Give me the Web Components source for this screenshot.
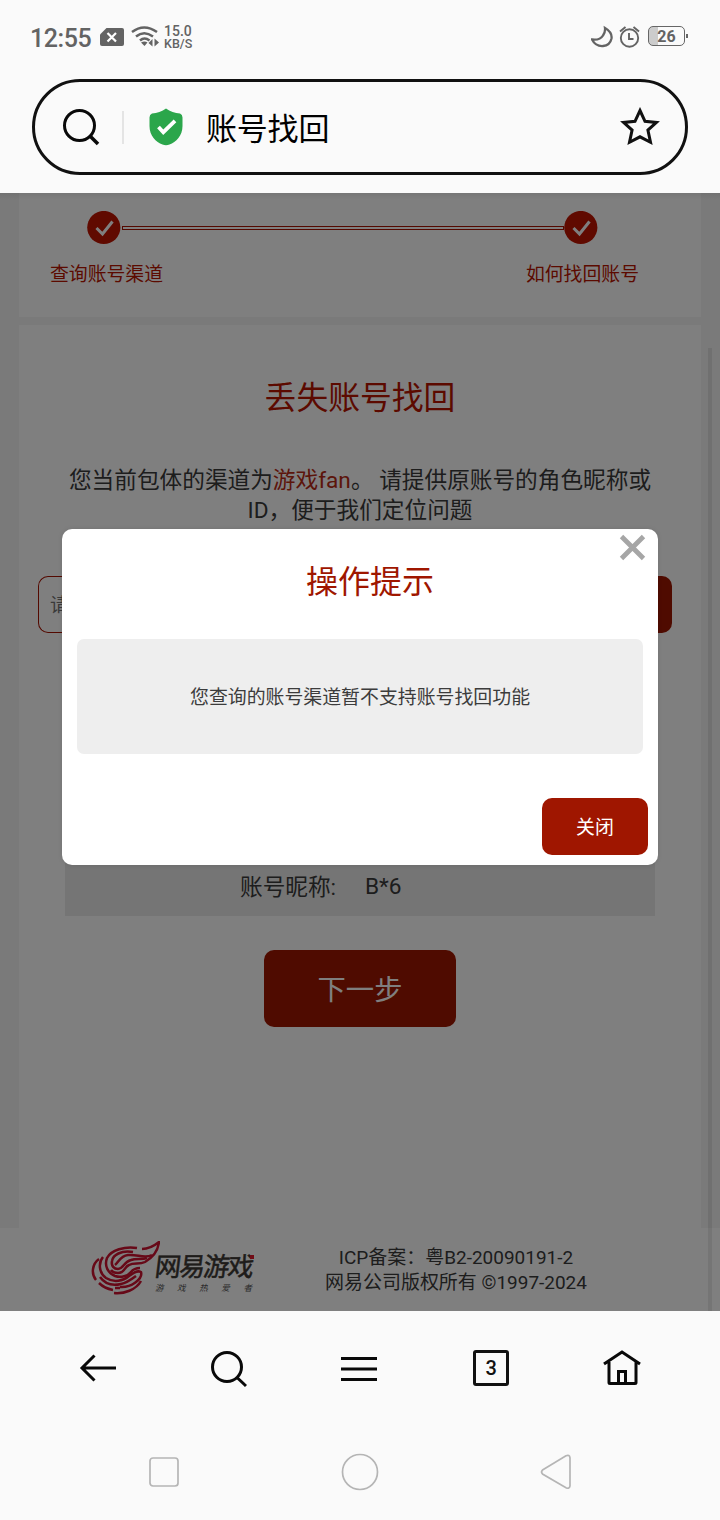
<!DOCTYPE html>
<html lang="zh-CN">
<head>
<meta charset="utf-8">
<title>账号找回</title>
<style>
html,body{margin:0;padding:0}
body{width:720px;height:1520px;overflow:hidden;background:#fafafa;font-family:Roboto,"Noto Sans CJK SC",sans-serif}
</style>
</head>
<body>
<phone-screen></phone-screen>
<script>
const define = (name, css, html) => customElements.define(name, class extends HTMLElement {
  constructor() {
    super();
    this.attachShadow({mode: "open"}).innerHTML =
      `<style>*{box-sizing:border-box}svg{display:block;flex:none}:host{box-sizing:border-box}${css}</style>${html}`;
  }
});

define("status-bar", `
:host{display:flex;justify-content:space-between;height:79px;padding:25px 35px 0 30px;color:#636363}
.side{display:flex;height:24px;align-items:center}
.time{font-size:25px;font-weight:500;line-height:24px;letter-spacing:-.45px;width:70px;padding-top:3px}
.rate{font-size:12.500px;line-height:12px;font-weight:500;margin-left:5px;width:32px}
.rate div:first-child{font-size:14px;line-height:13px;margin-bottom:1px}
.rate div{height:12px}
.battery{width:37px;height:20px;border:1.3px solid #666;border-radius:5px;margin-left:8px;margin-top:-2px;position:relative;
 background:linear-gradient(90deg,#ccc 9px,transparent 9px);text-align:center;font:700 16px/19px Roboto,sans-serif}
.battery:after{content:"";position:absolute;right:-4px;top:7px;width:2px;height:4px;background:#666}
`, `
<div class="side"><div class="time">12:55</div>
<svg width="24" height="24" viewBox="0 0 24 24"><path d="M6.500 3H22q2 0 2 2V19q0 2-2 2H2q-2 0-2-2V9.500Z" fill="#636363"/><path d="m7.500 8 8.500 8.500m0-8.500-8.500 8.500" stroke="#fff" stroke-width="2.200"/></svg>
<svg width="28" height="24" viewBox="0 0 28 24" style="margin-left:7px" fill="none" stroke="#636363" stroke-width="2.500"><path d="M1 7Q13-2 26 7M5 11.500q8-6.500 17 0M9 15.500q4.500-4 9.500 0"/><path d="m10 17.500 3.500 3.500 3-3.500q-3-2-6.500 0Z" fill="#636363" stroke="none"/><path d="M21.500 14v7.500L17.500 18ZM23.500 21.500V13.500l4.500 4Z" fill="#636363" stroke="none"/></svg>
<div class="rate"><div>15.0</div><div>KB/S</div></div></div>
<div class="side">
<svg width="22" height="24" viewBox="0 0 22 24" fill="none" stroke="#636363" stroke-width="2.300"><path d="M14 3q7.500 4.500 6.500 10.500-1.500 7-8.500 7.500-7.500.5-11-6.500 8 1 11-4Q14.500 7 14 3Z"/></svg>
<svg width="21" height="24" viewBox="0 0 21 24" fill="none" stroke="#636363" stroke-width="1.900" style="margin-left:6px"><circle cx="10.500" cy="13" r="8.700"/><path d="M10 8v6h4.500M1 6.500 6.500 2M14.500 2 20 6.500"/></svg>
<div class="battery">26</div></div>`);

define("address-bar", `
:host{display:flex;align-items:center;height:96px;margin:0 32px;border:3px solid #111;border-radius:48px;padding:0 25px 0 27px}
.sep{width:2px;height:33px;background:#e4e4e4;margin:0 25px 0 22px}
.title{flex:1;font-size:31px;line-height:40px;margin-left:23px;color:#000;padding-top:5px;letter-spacing:-.2px}
`, `
<svg width="38" height="38" viewBox="0 0 38 38" fill="none" stroke="#090909" stroke-width="3"><circle cx="17.500" cy="17.500" r="15"/><path d="m27.500 27.500 8.500 8.500" stroke-width="3.500"/></svg>
<div class="sep"></div>
<svg width="34" height="38" viewBox="0 0 34 38"><path d="M17 .5c4 3 9 4.500 14 5q2.500 1 2.500 4V18C33.500 28 27 34 20.500 36.500q-3.500 1.500-7 0C7 34 .5 28 .5 18V9.500q0-3 2.500-4c5-.5 10-2 14-5Z" fill="#2ba64b"/><path d="m9.500 19 4.800 5.200L26 12.800" fill="none" stroke="#fff" stroke-width="3.800"/></svg>
<div class="title"><slot></slot></div>
<svg width="40" height="40" viewBox="0 0 40 40" fill="none" stroke="#111" stroke-width="3"><path d="m20 3.500 5 10.800 11.400 1.100-8.500 7.700 2.600 12.200L20 29.800 9.500 35.300l2.600-12.200-8.500-7.700 11.400-1.100Z"/></svg>`);

define("step-tracker", `
:host{display:block;height:124px;margin:0 19px;background:#fff;padding-top:18px;color:#b81400}
.track{display:flex;align-items:center;width:511px;margin-left:68px;height:33px}
.line{flex:1;height:4px;border:1px solid #a91300;margin-left:1px}
.labels{display:flex;justify-content:space-between;padding:0 62px 0 31px;font-size:18.85px;line-height:26px;margin-top:18px;white-space:nowrap}
`, `
<div class="track"><step-dot></step-dot><div class="line"></div><step-dot></step-dot></div>
<div class="labels"><span>查询账号渠道</span><span>如何找回账号</span></div>`);

define("step-dot", `:host{display:block}`, `
<svg width="34" height="34" viewBox="0 0 34 34"><circle cx="16.800" cy="16.500" r="16.600" fill="#c01500"/><path d="m9.500 17 6 6L25.500 10.500" fill="none" stroke="#fff" stroke-width="3"/></svg>`);

define("red-button", `
:host{display:flex;align-items:center;justify-content:center;background:#9f1600;color:#fff;border-radius:10px;white-space:nowrap;padding-bottom:2px}
`, `<slot></slot>`);

define("recovery-card", `
:host{display:block;height:903px;margin:8px 19px 0;background:#fff;color:#3a3a3a;font-size:22.670px}
h1{margin:0;padding-top:50px;text-align:center;font-size:31.800px;line-height:46px;font-weight:400;color:#b81400}
p{margin:45px 0 0;text-align:center;line-height:30px;white-space:nowrap}
em{font-style:normal;color:#b82a14}
.query{display:flex;margin:50px 29px 0 19px;height:57px}
.input{flex:1;border:1.500px solid #a91300;border-right:0;border-radius:10px 0 0 10px;padding-left:11px;font-size:18.900px;line-height:57px;color:#757575}
.query red-button{width:130px;border-radius:0 10px 10px 0}
.row{display:flex;align-items:center;height:59px;margin:224px 46px 0;background:#eaeaea;padding-left:175px}
.row span{width:125px;padding-bottom:2px}
.next{width:192px;height:77px;margin:34px auto 0;font-size:28.300px}
`, `
<h1>丢失账号找回</h1>
<p>您当前包体的渠道为<em>游戏fan</em>。 请提供原账号的角色昵称或<br>ID，便于我们定位问题</p>
<div class="query"><div class="input">请</div><red-button></red-button></div>
<div class="row"><span>账号昵称:</span>B*6</div>
<red-button class="next">下一步</red-button>`);

define("brand-logo", `
:host{display:flex;width:164px;height:54px;gap:0}
.name{margin:9px 0 0 -5px;width:100px;color:#3d3834;position:relative}
.big{font-size:26px;line-height:35px;font-weight:400;-webkit-text-stroke:.5px;letter-spacing:-1.700px;white-space:nowrap;transform:skewX(-7deg)}
.small{display:flex;justify-content:space-between;font-size:8.500px;line-height:10px;margin-top:-2px;color:#555;font-style:italic;width:97px}
.dot{position:absolute;right:1px;top:5px;width:4px;height:4px;background:#e0192c}
`, `
<svg width="69" height="54" viewBox="0 0 69 54" fill="none" stroke="#cf1230" stroke-width="2.500">
<path d="M51 8C58 8 63 5 68 1c-1 9-7 16-14 20-6 3-11 0-16 3-5 2-4 8-11 8q-5 0-7-3"/>
<path d="M46 7C34 5 20 9 16 17c-3 8 1 15 8 18 6 2 13 0 16-4q3-4 9-4"/>
<path d="M61 14C54 18 46 13 37 14c-8 1-9 7-13 10"/>
<path d="M42 11c-12-2-20 3-21 9-1 5 2 8 6 8 6 0 5-7 13-9 5-2 11 0 16-2"/>
<path d="M12 16C7 22 8 32 15 37c8 5 17 3 23-2 4-3 8-6 12-4 2 7-10 16-21 15"/>
<path d="M8 18C1 23 0 33 5 39M9 36c5 7 13 9 21 7 6-1 11-5 15-8M8 42c4 4 9 6 14 7m1 3c10 1 22-3 27-12M24 47h5"/></svg>
<div class="name"><div class="big">网易游戏</div><div class="small"><span>游</span><span>戏</span><span>热</span><span>爱</span><span>者</span></div><div class="dot"></div></div>`);

define("page-footer", `
:host{display:flex;height:83px;background:#fff;padding:13px 0 0 91px;color:#3a3a3a}
.legal{width:264px;margin-left:69px;padding-top:4px;text-align:center;font-size:18.980px;line-height:25px;white-space:nowrap}
`, `<brand-logo></brand-logo><div class="legal">ICP备案：粤B2-20090191-2<br>网易公司版权所有 ©1997-2024</div>`);

define("prompt-dialog", `
:host{display:block;width:596px;height:336px;background:#fff;border-radius:10px;box-shadow:0 0 5px rgba(0,0,0,.1);padding:29px 15px 10px;color:#3c3c3c}
h2{margin:0 0 0 20px;text-align:center;font-weight:400;font-size:32px;line-height:48px;color:#9f1600}
.message{display:flex;align-items:center;justify-content:center;height:115px;margin-top:33px;padding-bottom:2px;border-radius:7px;background:#eee;font-size:18.900px}
red-button{width:106px;height:57px;margin:44px -5px 0 auto;font-size:18.900px}
svg{position:absolute;right:12px;top:5px}
`, `
<svg width="27" height="27" viewBox="0 0 27 27" stroke="#a6a6a6" stroke-width="4.800"><path d="m2.500 2.500 22 22m0-22-22 22"/></svg>
<h2><slot name="title"></slot></h2><div class="message"><slot></slot></div><red-button>关闭</red-button>`);

define("web-viewport", `
:host{display:block;position:relative;height:1118px;margin-top:18px;background:#f5f5f5;overflow:hidden}
.mask{position:absolute;inset:0;background:rgba(0,0,0,.5)}
.mask:before{content:"";position:absolute;inset:0 0 auto;height:7px;background:linear-gradient(rgba(0,0,0,.07),transparent)}
.scroll{position:absolute;right:8px;top:155px;bottom:0;width:4px;background:rgba(0,0,0,.08)}
prompt-dialog{position:absolute;left:62px;top:336px}
`, `
<step-tracker></step-tracker><recovery-card></recovery-card><page-footer></page-footer>
<div class="scroll"></div><div class="mask"></div>
<prompt-dialog><span slot="title">操作提示</span>您查询的账号渠道暂不支持账号找回功能</prompt-dialog>`);

define("browser-toolbar", `
:host{display:flex;justify-content:space-between;align-items:center;height:113px;padding:2px 78px 0 79px}
.tabs{width:36px;height:36px;border:3px solid #111;border-radius:3px;text-align:center;font:500 20px/31px Roboto,sans-serif;color:#111;margin-top:-2px}
`, `
<svg width="38" height="38" viewBox="0 0 38 38" fill="none" stroke="#090909" stroke-width="3"><path d="M15.500 5.500 3 18 15.500 30.500M3 18h34"/></svg>
<svg width="38" height="38" viewBox="0 0 38 38" fill="none" stroke="#090909" stroke-width="3"><circle cx="17" cy="17" r="14.500"/><path d="m27 27.500 9 8.500"/></svg>
<svg width="40" height="38" viewBox="0 0 40 38" stroke="#090909" stroke-width="3"><path d="M0 8.500h36M0 19h36M0 29.500h36"/></svg>
<div class="tabs">3</div>
<svg width="40" height="38" viewBox="0 0 40 38" fill="none" stroke="#090909" stroke-width="3"><path d="M2 14 20 2 38 14M7 12v20.500q0 1 1 1h25q1 0 1-1V12M16.500 33V21.500h7V33"/></svg>`);

define("system-nav", `
:host{display:flex;justify-content:space-between;align-items:center;height:96px;padding:0 148px 0 148px}
svg{fill:none;stroke:#b5b5b5;stroke-width:1.700}
`, `
<svg width="32" height="38" viewBox="0 0 32 38"><rect x="2" y="5" width="28" height="28" rx="3"/></svg>
<svg width="38" height="38" viewBox="0 0 38 38" style="margin-right:-1px"><circle cx="19" cy="19" r="17.500"/></svg>
<svg width="33" height="38" viewBox="0 0 33 38"><path d="M3.500 17 27 2.800q3.500-1.500 4 2v28q-.5 3.500-4 2L3.500 21q-2-2 0-4Z"/></svg>`);

define("phone-screen", `:host{display:block;width:720px;height:1520px}`, `
<status-bar></status-bar><address-bar>账号找回</address-bar><web-viewport></web-viewport>
<browser-toolbar></browser-toolbar><system-nav></system-nav>`);
</script>
</body>
</html>
